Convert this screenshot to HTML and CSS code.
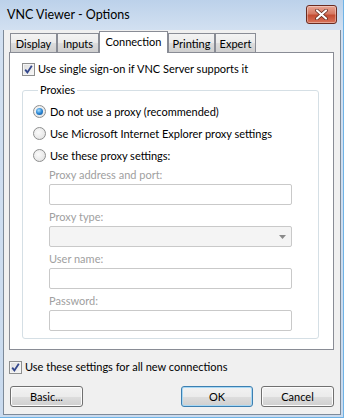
FILE: index.html
```html
<!doctype html>
<html lang="en">
    <head>
        <title>VNC Viewer - Options</title>
        <link rel="stylesheet" href="styles.css">
    </head>
    <body>
        <div class="window">
            <div class="titlebar">
                <span class="title">VNC Viewer - Options</span>
                <div class="close">
                    <svg width="13" height="11" viewBox="0 0 13 11">
                        <path d="M2 1.5 L11 9.5 M11 1.5 L2 9.5" stroke="#5a2418" stroke-width="3.6" stroke-linecap="round"/>
                        <path d="M2 1.5 L11 9.5 M11 1.5 L2 9.5" stroke="#fff" stroke-width="2.2" stroke-linecap="round"/>
                    </svg>
                </div>
            </div>
            <div class="client">
                <div class="tabs">
                    <div class="tab t-display">Display</div>
                    <div class="tab t-inputs">Inputs</div>
                    <div class="tab active t-conn">Connection</div>
                    <div class="tab t-print">Printing</div>
                    <div class="tab t-expert">Expert</div>
                </div>
                <div class="panel">
                    <div class="check">
                        <span class="box">
                            <svg width="9" height="9" viewBox="0 0 9 9"><path d="M1.2 4.6 L3.4 7.4 L7.8 0.8" fill="none" stroke="#33478c" stroke-width="1.8"/></svg>
                        </span>
                        Use single sign-on if VNC Server supports it
                    </div>
                    <fieldset class="group">
                        <legend>Proxies</legend>
                        <div class="radio"><span class="dot on"></span>Do not use a proxy (recommended)</div>
                        <div class="radio"><span class="dot"></span>Use Microsoft Internet Explorer proxy settings</div>
                        <div class="radio"><span class="dot"></span>Use these proxy settings:</div>
                        <div class="fields">
                            <div class="flabel">Proxy address and port:</div>
                            <div class="input"></div>
                            <div class="flabel">Proxy type:</div>
                            <div class="input select">
                                <svg width="7" height="4" viewBox="0 0 7 4"><path d="M0 0 H7 L3.5 4 Z" fill="#8a8a8a"/></svg>
                            </div>
                            <div class="flabel">User name:</div>
                            <div class="input"></div>
                            <div class="flabel">Password:</div>
                            <div class="input"></div>
                        </div>
                    </fieldset>
                </div>
                <div class="check all">
                    <span class="box">
                        <svg width="9" height="9" viewBox="0 0 9 9"><path d="M1.2 4.6 L3.4 7.4 L7.8 0.8" fill="none" stroke="#33478c" stroke-width="1.8"/></svg>
                    </span>
                    Use these settings for all new connections
                </div>
                <div class="buttons">
                    <div class="btn">Basic...</div>
                    <div class="spacer"></div>
                    <div class="btn default">OK</div>
                    <div class="btn">Cancel</div>
                </div>
            </div>
        </div>
    </body>
</html>
```

FILE: styles.css
```css
body{
    margin: 0;
    font-family: Lato, "Liberation Sans", sans-serif;
    font-size: 11px;
    color: #000;
}
.window{
    width: 344px;
    height: 418px;
    box-sizing: border-box;
    display: flex;
    flex-direction: column;
    background: linear-gradient(180deg, #bcd1ea 0px, #d2e0f1 30px, #c9daee 100%);
    border-right: 1px solid #6fb3e6;
    border-bottom: 1px solid #6fb3e6;
}
.titlebar{
    height: 30px;
    display: flex;
    align-items: center;
    padding-left: 7px;
    padding-right: 5px;
    position: relative;
}
.title{
    font-size: 12.5px;
    padding-bottom: 2px;
}
.close{
    position: absolute;
    right: 6px;
    top: 5px;
    width: 29px;
    height: 17px;
    border: 1px solid #6b2b20;
    border-radius: 3px;
    background: linear-gradient(180deg, #e8a493 0%, #d67a64 45%, #c44d33 55%, #d9735a 100%);
    display: flex;
    align-items: center;
    justify-content: center;
    box-shadow: inset 0 0 0 1px rgba(255,255,255,0.35);
}
.client{
    flex: 1;
    margin: 0 2px 2px 3px;
    background: #f0f0f0;
    border: 1px solid #7d8a99;
    border-top: none;
    display: flex;
    flex-direction: column;
}
.tabs{
    height: 21px;
    margin-top: 1px;
    padding-left: 6px;
    display: flex;
    align-items: flex-end;
    position: relative;
    z-index: 2;
}
.tab{
    height: 19px;
    box-sizing: border-box;
    border: 1px solid #898c95;
    border-bottom: none;
    background: linear-gradient(180deg, #f3f3f3 0%, #ebebeb 50%, #dddddd 51%, #cfcfcf 100%);
    display: flex;
    align-items: center;
    justify-content: center;
}
.t-display{ width: 47px; }
.t-inputs{ width: 42px; }
.t-conn{ width: 69px; }
.t-print{ width: 47px; }
.t-expert{ width: 41px; }
.tab.active{
    height: 22px;
    background: #fff;
    margin-bottom: -1px;
    padding-bottom: 2px;
}
.panel{
    margin: 0 6px 0 5px;
    height: 298px;
    box-sizing: border-box;
    background: #fff;
    border: 1px solid #898c95;
    padding: 8px 14px 0 12px;
}
.check{
    display: flex;
    align-items: center;
    height: 16px;
    line-height: 16px;
}
.box{
    width: 11px;
    height: 11px;
    border: 1px solid #8e8f8f;
    background: linear-gradient(135deg, #dcdcdc 0%, #f8f8f8 100%);
    box-shadow: inset 0 0 0 1px #f4f4f4;
    margin-right: 3px;
    display: flex;
    align-items: center;
    justify-content: center;
}
.group{
    margin: 5px 0 0 0;
    padding: 2px 0 7px 10px;
    border: 1px solid #d5dfe5;
    border-radius: 3px;
}
.group legend{
    padding: 0 2px;
    margin-left: 5px;
    line-height: 16px;
}
.radio{
    height: 22px;
    display: flex;
    align-items: center;
}
.dot{
    width: 11px;
    height: 11px;
    border: 1px solid #8e8f8f;
    border-radius: 50%;
    background: radial-gradient(circle at 40% 40%, #fbfbfb 0%, #dedede 100%);
    margin-right: 4px;
    display: flex;
    align-items: center;
    justify-content: center;
}
.dot.on::after{
    content: "";
    width: 7px;
    height: 7px;
    border-radius: 50%;
    background: radial-gradient(circle at 40% 35%, #a9e0ff 0%, #2b86d4 50%, #0f4c8d 100%);
}
.fields{
    margin-left: 16px;
    margin-top: 1px;
}
.flabel{
    color: #a0a0a0;
    line-height: 16px;
    margin-top: 4px;
}
.flabel:first-child{
    margin-top: 0;
}
.input{
    width: 243px;
    height: 21px;
    box-sizing: border-box;
    margin-top: 1px;
    border: 1px solid #c9c9c9;
    border-radius: 2px;
    background: #fff;
}
.select{
    background: #f4f4f4;
    display: flex;
    align-items: center;
    justify-content: flex-end;
    padding-right: 5px;
}
.check.all{
    margin: 9px 0 0 5px;
}
.buttons{
    display: flex;
    margin: 11px 6px 0 6px;
}
.spacer{
    flex: 1;
}
.btn{
    width: 73px;
    height: 21px;
    box-sizing: border-box;
    border: 1px solid #707070;
    border-radius: 3px;
    background: linear-gradient(180deg, #f2f2f2 0%, #ebebeb 50%, #dddddd 51%, #cfcfcf 100%);
    box-shadow: inset 0 0 0 1px #fcfcfc;
    display: flex;
    align-items: center;
    justify-content: center;
    margin-left: 8px;
}
.btn:first-child{
    margin-left: 0;
}
.btn.default{
    width: 72px;
    border-color: #3c7fb1;
    box-shadow: inset 0 0 0 1px #a8d8f4;
}
```
